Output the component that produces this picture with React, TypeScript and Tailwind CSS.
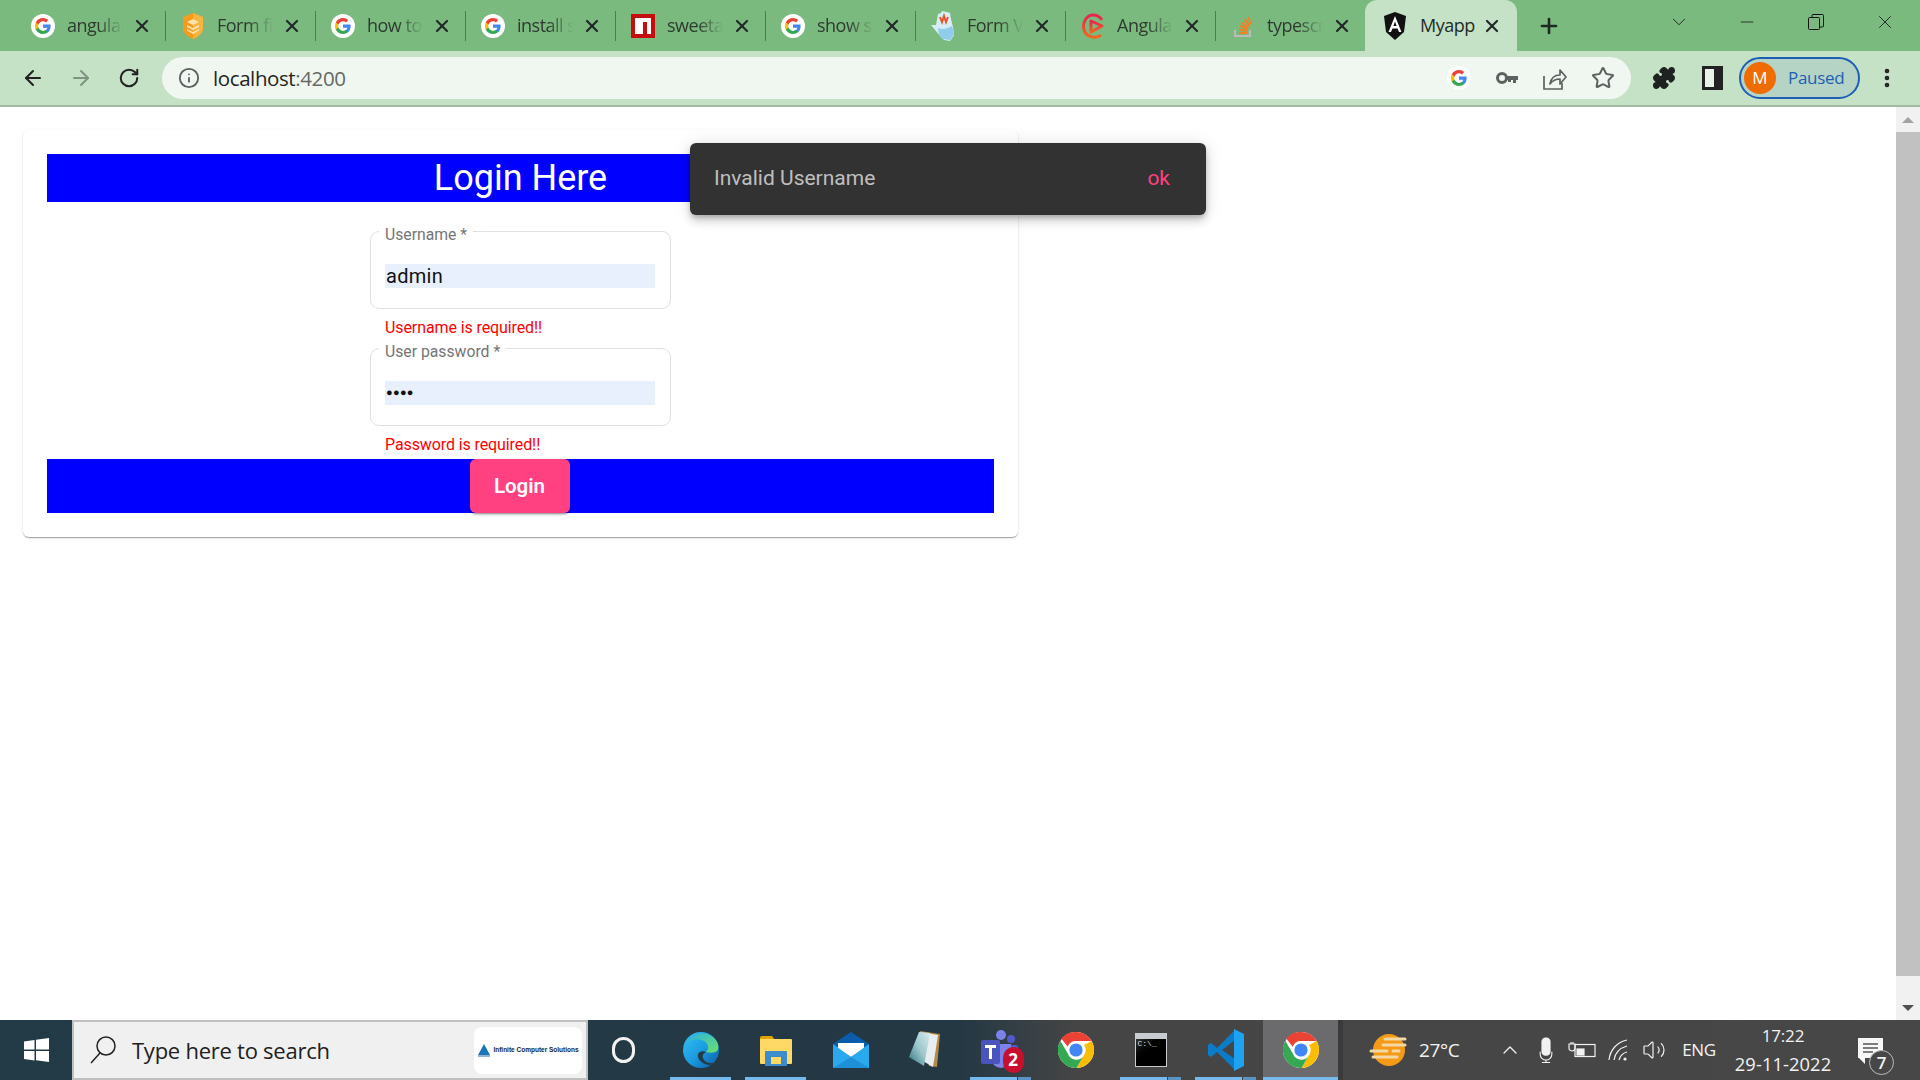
import React from "react";
import { ArrowLeft, ArrowRight, RotateCw, Info, X, Plus, ChevronDown, Minus, Star, Puzzle, EllipsisVertical, ChevronUp, Volume2 } from "lucide-react";

const G = ({ s = 24 }: { s?: number }) => (
  <svg width={s} height={s} viewBox="0 0 24 24" className="shrink-0">
    <circle cx="12" cy="12" r="12" fill="#fff" />
    <path d="M19.6 12.2c0-.6 0-1.1-.1-1.6H12v3.1h4.3c-.2 1-.8 1.9-1.6 2.4v2h2.6c1.5-1.4 2.3-3.4 2.3-5.9z" fill="#4285F4" />
    <path d="M12 20c2.2 0 4-.7 5.3-1.9l-2.6-2c-.7.5-1.6.8-2.7.8-2.1 0-3.9-1.4-4.5-3.3H4.8v2.1C6.1 18.2 8.8 20 12 20z" fill="#34A853" />
    <path d="M7.5 13.6c-.2-.5-.3-1-.3-1.6s.1-1.1.3-1.6V8.3H4.8C4.3 9.4 4 10.7 4 12s.3 2.6.8 3.7l2.7-2.1z" fill="#FBBC05" />
    <path d="M12 7.2c1.2 0 2.2.4 3 1.2l2.3-2.3C15.9 4.8 14.1 4 12 4 8.8 4 6.1 5.8 4.8 8.3l2.7 2.1c.6-1.8 2.4-3.2 4.5-3.2z" fill="#EA4335" />
  </svg>
);

const Shield = () => (
  <svg width="24" height="26" viewBox="0 0 24 26" className="shrink-0">
    <path d="M12 0l10 4v11c0 5-5 9-10 11C7 24 2 20 2 15V4z" fill="#f89a1c" />
    <path d="M12 0l10 4v11c0 5-5 9-10 11z" fill="#f5b53f" />
    <path d="M12 6l6 3-6 3-6-3zM6 12l6 3 6-3v2l-6 3-6-3zM6 16l6 3 6-3v1.5L12 21l-6-3.5z" fill="#fde3b0" />
  </svg>
);

const Npm = () => (
  <svg width="24" height="24" viewBox="0 0 24 24" className="shrink-0">
    <rect width="24" height="24" fill="#c60c0c" />
    <path d="M4 4h16v16h-4V8h-4v12H4z" fill="#fff" />
  </svg>
);

const Hand = () => (
  <svg width="26" height="30" viewBox="0 0 26 30" className="shrink-0">
    <path d="M1 14l5 0 2-11 3-1 1-2 5 1 3 1 1 6 2 8 1 8-4 6-6-1-4-4z" fill="#d6edf5" />
    <path d="M8 17c4 2 9 1 14-2l2 8-4 6-7-1-4-4z" fill="#8fcdea" />
    <path d="M10 6l2 5 2-6 2 6 2-5" stroke="#e8552d" strokeWidth="2" fill="none" />
  </svg>
);

const AngularSwirl = () => (
  <svg width="26" height="28" viewBox="0 0 26 28" className="shrink-0">
    <defs>
      <linearGradient id="sw" x1="0" y1="0" x2="0" y2="1">
        <stop offset="0" stopColor="#e6264f" />
        <stop offset="1" stopColor="#f2661f" />
      </linearGradient>
    </defs>
    <path d="M21 23c-3 3-14 4-17-5C2 10 7 3 13 3c4 0 7 2 9 5" stroke="url(#sw)" strokeWidth="3" fill="none" />
    <path d="M11 9l11 5-11 6z" fill="none" stroke="url(#sw)" strokeWidth="3" strokeLinejoin="round" />
  </svg>
);

const SO = () => (
  <svg width="24" height="26" viewBox="0 0 24 26" className="shrink-0">
    <path d="M4 17v6h15v-6" stroke="#bcbbbb" strokeWidth="2" fill="none" />
    <path d="M8 20h8M8.3 16.5l8 1.5M9.3 13l7.4 3.2M11 9.6l6.4 5M13.8 6.4l4.7 6.2M17.3 4l2.8 7.2" stroke="#f48024" strokeWidth="2" />
  </svg>
);

const AngularA = () => (
  <svg width="24" height="28" viewBox="0 0 24 28" className="shrink-0">
    <path d="M12 0L1 4l2 16 9 8 9-8 2-16z" fill="#111" />
    <path d="M12 4L5.5 20H8l1.4-3.6h5.2L16 20h2.5zM10.4 14L12 9.6l1.6 4.4z" fill="#fff" fillRule="evenodd" />
  </svg>
);

const Tab = ({ icon, label }: { icon: React.ReactNode; label: string }) => (
  <div className="flex items-center w-[150px] h-full shrink-0">
    <div className="w-[54px] flex justify-center items-center">{icon}</div>
    <span className="w-[56px] -ml-[3px] overflow-hidden whitespace-nowrap text-[18px] text-[#2f3a30] [mask-image:linear-gradient(90deg,#000_55%,transparent_100%)] font-['Open_Sans',sans-serif] tracking-[-0.5px]">
      {label}
    </span>
    <X size={20} strokeWidth={2.6} className="ml-[9px] text-[#22282a] shrink-0" />
    <div className="ml-auto w-[1px] h-[30px] bg-[#4f7a52]" />
  </div>
);

const Field = ({ label, children, mt }: { label: string; children: React.ReactNode; mt: string }) => (
  <fieldset className={`w-[301px] h-[86px] border border-[#e0e0e0] rounded-[9px] pl-[14px] pr-[15px] ${mt}`}>
    <legend className="px-[6px] -ml-[6px] text-[15.75px] leading-[17px] text-[#757575]">
      <span className="block translate-y-[3px]">{label}</span>
    </legend>
    <div className="mt-[24px] h-[24px] w-[270px] bg-[#e8f0fe] flex items-center">{children}</div>
  </fieldset>
);

const Chrome = () => (
  <svg width="36" height="36" viewBox="0 0 36 36">
    <circle cx="18" cy="18" r="18" fill="#fff" />
    <path d="M18 0a18 18 0 0115.6 9H18a9 9 0 00-8.4 5.8L3.3 6.6A18 18 0 0118 0z" fill="#ea4335" />
    <path d="M33.6 9A18 18 0 0118.5 36l7.3-12.6A9 9 0 0026 13z" fill="#fbbc04" />
    <path d="M2.4 9A18 18 0 0018.5 36l6.7-11.6A9 9 0 019.8 21.5z" fill="#34a853" />
    <circle cx="18" cy="18" r="8.2" fill="#fff" />
    <circle cx="18" cy="18" r="6.6" fill="#4285f4" />
  </svg>
);

const Edge = () => (
  <svg width="36" height="36" viewBox="0 0 36 36">
    <defs>
      <linearGradient id="eg" x1="0" y1="0" x2="1" y2="1">
        <stop offset="0" stopColor="#35c1f1" />
        <stop offset="0.5" stopColor="#1b9de2" />
        <stop offset="1" stopColor="#0c59a4" />
      </linearGradient>
      <linearGradient id="eg2" x1="0" y1="0" x2="1" y2="1">
        <stop offset="0" stopColor="#2bb3e0" />
        <stop offset="1" stopColor="#6fe06a" />
      </linearGradient>
    </defs>
    <circle cx="18" cy="18" r="18" fill="url(#eg)" />
    <path d="M5 10C9 2 20-1 28 4c7 4 9 11 6 15-2 2-8 2-11 1 3-3 3-8-2-11C15 6 9 7 5 10z" fill="url(#eg2)" />
    <path d="M23 20c-4-2-9 0-8 5 1 4 6 8 12 8 3 0 6-1 7-3-6 3-13 0-14-4-1-3 1-5 3-6z" fill="#263a45" />
  </svg>
);

const Folder = () => (
  <svg width="32" height="32" viewBox="0 0 32 32">
    <path d="M0 4a2 2 0 012-2h10l3 4H0z" fill="#e2a500" />
    <rect y="5" width="32" height="25" rx="1" fill="#ffd966" />
    <rect x="5" y="17" width="22" height="15" rx="1" fill="#3d8bcb" />
    <rect x="11" y="23" width="10" height="7" fill="#ffd966" />
  </svg>
);

const Mail = () => (
  <svg width="36" height="36" viewBox="0 0 36 36">
    <path d="M0 12L18 0l18 12v6H0z" fill="#0b5cab" />
    <path d="M5 11h26v6L18 25 5 17z" fill="#fff" />
    <path d="M0 12l18 13 18-13v24H0z" fill="#2aa9ee" />
    <path d="M36 36H0l18-11z" fill="#1e90d8" />
  </svg>
);

const Notepad = () => (
  <svg width="36" height="38" viewBox="0 0 36 38">
    <defs>
      <linearGradient id="np" x1="0" y1="1" x2="1" y2="0">
        <stop offset="0" stopColor="#2d7481" />
        <stop offset="0.5" stopColor="#9cc7cc" />
        <stop offset="1" stopColor="#d7ecef" />
      </linearGradient>
    </defs>
    <path d="M12 0l20 3-3 33-8-1z" fill="#b48a4a" />
    <path d="M11 1l19 3-5 32-10-6z" fill="#e8eef0" />
    <path d="M11 1L1 26l15 9 6-33z" fill="url(#np)" />
  </svg>
);

const Teams = () => (
  <div className="relative w-[40px] h-[40px]">
    <svg width="40" height="40" viewBox="0 0 40 40">
      <circle cx="20" cy="5" r="5" fill="#7b83eb" />
      <circle cx="30" cy="9" r="4" fill="#5059c9" />
      <rect x="24" y="15" width="13" height="14" rx="2" fill="#5059c9" />
      <path d="M10 14h20v14a10 10 0 01-20 0z" fill="#7b83eb" />
      <rect x="0" y="10" width="19" height="24" rx="2" fill="#4b53bc" />
      <path d="M4 15h11v3h-4v11H8V18H4z" fill="#fff" />
    </svg>
    <div className="absolute -right-[3px] -bottom-[3px] w-[21px] h-[26px] rounded-full bg-[#c8102e] text-white text-[17px] font-bold flex items-center justify-center font-['Open_Sans',sans-serif]">
      2
    </div>
  </div>
);

const Cmd = () => (
  <div className="w-[32px] h-[34px] bg-[#c8ccd0] p-[1px] flex flex-col">
    <div className="h-[5px] bg-[#c8ccd0]" />
    <div className="flex-1 bg-gradient-to-br from-[#333] via-black to-black text-[8px] leading-[10px] text-[#ddd] pl-[2px] font-['Liberation_Mono',monospace]">
      C:\_
    </div>
  </div>
);

const VSCode = () => (
  <svg width="36" height="42" viewBox="0 0 36 42">
    <path d="M27 1L9 19 3 14 0 16v10l3 2 6-5 18 18V30L14 21 27 11z" fill="#0a7cc9" />
    <path d="M26 0l10 5v32l-10 5z" fill="#1fa3f0" />
  </svg>
);

const TaskItem = ({ children, bar, split, active }: { children: React.ReactNode; bar?: boolean; split?: boolean; active?: boolean }) => (
  <div className={`w-[75px] h-full flex flex-col shrink-0 ${active ? "bg-[#6b6b6d]" : ""}`}>
    <div className="flex-1 flex items-center justify-center pt-[2px]">{children}</div>
    {bar ? (
      <div className={`h-[3px] flex gap-[1px] ${active ? "" : "mx-[7px]"}`}>
        <div className="flex-1 bg-[#76b9ed]" />
        {split ? <div className="w-[13px] bg-[#5a94c4]" /> : null}
      </div>
    ) : (
      <div className="h-[3px]" />
    )}
  </div>
);

export default function App() {
  return (
    <div className="w-[1920px] h-[1080px] overflow-hidden flex flex-col bg-white font-['Roboto',sans-serif] relative">
      {/* Tab strip */}
      <div className="h-[51px] bg-[#7aba7e] flex items-center shrink-0 pl-[16px]">
        <Tab icon={<G />} label="angular" />
        <Tab icon={<Shield />} label="Form fi" />
        <Tab icon={<G />} label="how to" />
        <Tab icon={<G />} label="install s" />
        <Tab icon={<Npm />} label="sweeta" />
        <Tab icon={<G />} label="show s" />
        <Tab icon={<Hand />} label="Form V" />
        <Tab icon={<AngularSwirl />} label="Angula" />
        <Tab icon={<SO />} label="typescr" />
        <div className="w-[152px] -ml-[1px] h-full bg-[#c5e1c6] rounded-t-[12px] flex items-center shrink-0">
          <div className="w-[60px] flex justify-center"><AngularA /></div>
          <span className="-ml-[5px] w-[62px] text-[18px] text-[#222c24] font-['Open_Sans',sans-serif] tracking-[-0.5px]">Myapp</span>
          <X size={20} strokeWidth={2.6} className="ml-[0px] text-[#22282a]" />
        </div>
        <div className="w-[34px] flex justify-center ml-[15px] shrink-0">
          <Plus size={24} strokeWidth={2.6} className="text-[#1e2a20]" />
        </div>
        <div className="ml-[102px] flex items-center h-full text-[#1d1d1d] pb-[7px]">
          <ChevronDown size={22} strokeWidth={1} className="mr-[47px]" />
          <Minus size={20} strokeWidth={1} className="mr-[51px]" />
          <svg width="16" height="16" viewBox="0 0 16 16" className="mr-[50px]" fill="none" stroke="#111" strokeWidth="1">
            <rect x="0.5" y="3.5" width="11" height="12" rx="1" />
            <path d="M4 3V1.5a1 1 0 011-1h9.5a1 1 0 011 1V12a1 1 0 01-1 1H12" />
          </svg>
          <X size={22} strokeWidth={1} />
        </div>
      </div>

      {/* Toolbar */}
      <div className="h-[54px] bg-[#c5e1c6] flex items-center shrink-0 pl-[9px]">
        <div className="w-12 flex justify-center"><ArrowLeft size={24} strokeWidth={2} className="text-[#222]" /></div>
        <div className="w-12 flex justify-center"><ArrowRight size={24} strokeWidth={2} className="text-[#7e9480]" /></div>
        <div className="w-12 flex justify-center"><RotateCw size={22} strokeWidth={2.2} className="text-[#222]" /></div>
        <div className="w-[1469px] ml-[9px] h-[42px] rounded-full bg-[#f0f7f1] flex items-center pl-[16px] pr-[4px] shrink-0">
          <Info size={22} strokeWidth={2} className="text-[#5b5f60] mr-[13px]" />
          <span className="text-[20.5px] font-['Open_Sans',sans-serif] text-[#1f2421] tracking-[-0.4px]">
            localhost<span className="text-[#626a64]">:4200</span>
          </span>
          <div className="flex-1" />
          <div className="w-12 flex justify-center"><G s={24} /></div>
          <div className="w-12 flex justify-center">
            <svg width="22" height="14" viewBox="0 0 22 14"><circle cx="6" cy="7" r="4.5" fill="none" stroke="#5c6260" strokeWidth="3" /><path d="M10 5h12v4h-2v3h-3V9h-2v2h-3V9h-2z" fill="#5c6260" /></svg>
          </div>
          <div className="w-12 flex justify-center">
            <svg width="24" height="26" viewBox="0 0 24 26" fill="none" stroke="#5c6260" strokeWidth="1.7"><path d="M1 11v13h18v-6" /><path d="M7 19c1-6 5-9 10-9V5l6 7-6 7v-5c-4 0-7 1-10 5z" strokeLinejoin="round" /></svg>
          </div>
          <div className="w-12 flex justify-center"><Star size={24} strokeWidth={2} className="text-[#5c6260]" /></div>
        </div>
        <div className="w-12 ml-[9px] flex justify-center"><Puzzle size={24} className="text-[#1e2321]" fill="#1e2321" /></div>
        <div className="w-12 flex justify-center">
          <div className="w-[21px] h-[24px] border-[3px] border-r-[9px] border-[#222] bg-[#e8f2e8]" />
        </div>
        <div className="w-[121px] ml-[3px] h-[42px] rounded-full border-2 border-[#1c5fb4] bg-[#b5d4c6] flex items-center pl-[3px]">
          <div className="w-[32px] h-[32px] rounded-full bg-[#ef6c00] text-white text-[17px] flex items-center justify-center font-['Open_Sans',sans-serif]">M</div>
          <span className="ml-[12px] text-[17px] text-[#1c5fb4] font-['Open_Sans',sans-serif] tracking-[-0.3px]">Paused</span>
        </div>
        <div className="w-[54px] flex justify-center"><EllipsisVertical size={24} strokeWidth={2.6} className="text-[#222]" /></div>
      </div>
      <div className="h-[2px] bg-[#a4b8a5] shrink-0" />

      {/* Page */}
      <div className="flex-1 flex min-h-0 relative">
        <div className="flex-1 pl-[23px] pt-[23px]">
          <div className="w-[995px] h-[407px] rounded-[6px] bg-white p-[24px] flex flex-col shadow-[0_2px_1px_-1px_rgba(0,0,0,0.2),0_1px_1px_0_rgba(0,0,0,0.14),0_1px_3px_0_rgba(0,0,0,0.12)]">
            <div className="h-[48px] bg-[#0000ff] text-white text-[36px] leading-[48px] text-center shrink-0">Login Here</div>
            <div className="flex flex-col items-center">
              <Field label="Username *" mt="mt-[21px]">
                <span className="text-[20px] text-[#111] tracking-[0.3px] pl-[1px]">admin</span>
              </Field>
              <div className="w-[271px] text-[16px] leading-[22px] text-[#ff0000] mt-[8px] tracking-[-0.1px]">Username is required!!</div>
              <Field label="User password *" mt="mt-[1px]">
                <span className="text-[11px] text-[#111] tracking-[0.3px] pl-[1px]">●●●●</span>
              </Field>
              <div className="w-[271px] text-[16px] leading-[22px] text-[#ff0000] mt-[8px] tracking-[-0.1px]">Password is required!!</div>
            </div>
            <div className="h-[54px] mt-[3px] bg-[#0000ff] flex justify-center shrink-0">
              <button className="w-[100px] h-[54px] mr-[2px] rounded-[6px] bg-[#ff4081] text-white text-[20.5px] font-semibold shadow-[0_3px_1px_-2px_rgba(0,0,0,0.2),0_2px_2px_0_rgba(0,0,0,0.14),0_1px_5px_0_rgba(0,0,0,0.12)]">Login</button>
            </div>
          </div>
        </div>
        {/* Scrollbar */}
        <div className="w-[24px] bg-[#f1f1f1] flex flex-col items-center shrink-0">
          <div className="h-[25px] flex items-center justify-center w-full shrink-0">
            <div className="w-0 h-0 border-l-[6px] border-r-[6px] border-b-[6px] border-l-transparent border-r-transparent border-b-[#a3a3a3]" />
          </div>
          <div className="w-full h-[844px] bg-[#c1c1c1] shrink-0" />
          <div className="h-[25px] mt-auto flex items-center justify-center w-full shrink-0">
            <div className="w-0 h-0 border-l-[6px] border-r-[6px] border-t-[6px] border-l-transparent border-r-transparent border-t-[#505050]" />
          </div>
        </div>
      </div>

      {/* Snackbar */}
      <div className="absolute left-[690px] top-[143px] w-[516px] h-[72px] rounded-[6px] bg-[#323232] flex items-center justify-between pl-[24px] pr-[36px] shadow-[0_3px_5px_-1px_rgba(0,0,0,0.2),0_6px_10px_0_rgba(0,0,0,0.14),0_1px_18px_0_rgba(0,0,0,0.12)]">
        <span className="text-[21px] font-normal text-white/70">Invalid Username</span>
        <span className="text-[21px] font-normal text-[#ff4081]">ok</span>
      </div>

      {/* Taskbar */}
      <div className="h-[60px] shrink-0 flex bg-[linear-gradient(90deg,#223b46_0%,#243844_50%,#454545_56%,#474747_100%)] text-white">
        <div className="w-[72px] flex items-center justify-center shrink-0">
          <svg width="25" height="24" viewBox="0 0 25 24" fill="#fff"><path d="M0 3.5L10.5 2v9.5H0zM12 1.8L25 0v11.5H12zM0 13h10.5v9.5L0 21zM12 13h13v11l-13-1.8z" /></svg>
        </div>
        <div className="w-[516px] shrink-0 border-2 border-[#c0c0c0] bg-[#f0f0f0] flex items-center pl-[15px] pr-[4px]">
          <svg width="28" height="30" viewBox="0 0 28 30" fill="none" stroke="#222" strokeWidth="1.5" className="shrink-0">
            <circle cx="17" cy="11" r="9" />
            <path d="M11 18L2 28" />
          </svg>
          <span className="ml-[15px] text-[22px] text-[#202020] font-['Open_Sans',sans-serif] tracking-[-0.25px]">Type here to search</span>
          <div className="ml-auto w-[108px] h-[47px] rounded-[8px] bg-white flex items-center justify-center gap-[2px]">
            <svg width="14" height="16" viewBox="0 0 14 16"><path d="M7 2l6 11H1z" fill="#1a74b8" /><rect x="1" y="13" width="12" height="2" fill="#8fb8d6" /></svg>
            <span className="text-[6.5px] font-bold text-[#222] whitespace-nowrap font-['Liberation_Sans',sans-serif]">Infinite Computer Solutions</span>
          </div>
        </div>
        <TaskItem>
          <div className="w-[23px] h-[26px] mr-[4px] rounded-full border-[3px] border-[#f2f2f2]" />
        </TaskItem>
        <TaskItem bar><Edge /></TaskItem>
        <TaskItem bar><Folder /></TaskItem>
        <TaskItem><Mail /></TaskItem>
        <TaskItem><Notepad /></TaskItem>
        <TaskItem bar split><Teams /></TaskItem>
        <TaskItem><Chrome /></TaskItem>
        <TaskItem bar split><Cmd /></TaskItem>
        <TaskItem bar split><VSCode /></TaskItem>
        <TaskItem bar active><Chrome /></TaskItem>
        <div className="flex-1 flex items-center border-l-[5px] border-[#3a3a3a] font-['Open_Sans',sans-serif] text-[#f2f2f2]">
          <svg width="40" height="34" viewBox="0 0 40 34" className="ml-[26px] shrink-0">
            <circle cx="20" cy="17" r="16" fill="#f49a17" />
            <path d="M16 6h20M14 12h22M2 18h16M24 18h6M4 24h24" stroke="#f3d9a4" strokeWidth="3" strokeLinecap="round" />
          </svg>
          <span className="ml-[10px] w-[44px] text-[19px] tracking-[-0.4px] shrink-0 whitespace-nowrap">27°C</span>
          <ChevronUp size={24} strokeWidth={1.3} className="ml-[35px] shrink-0" />
          <svg width="20" height="26" viewBox="0 0 24 30" fill="none" stroke="#f2f2f2" strokeWidth="1.3" className="ml-[14px] shrink-0">
            <rect x="6.5" y="0" width="11" height="22" rx="5" fill="#f2f2f2" stroke="none" />
            <path d="M5 17v3a7 7 0 0014 0v-3M12 27v3M7 30h10" />
          </svg>
          <svg width="28" height="16" viewBox="0 0 28 16" fill="none" stroke="#f2f2f2" strokeWidth="1.2" className="ml-[12px] shrink-0">
            <rect x="7" y="2.5" width="20" height="12" />
            <rect x="9" y="7" width="7" height="6" fill="#f2f2f2" />
            <path d="M1 2h6v4a3 3 0 01-6 0zM3 0v2M5 0v2" />
          </svg>
          <svg width="24" height="24" viewBox="0 0 24 24" fill="none" stroke="#f2f2f2" strokeWidth="1.2" className="ml-[11px] shrink-0">
            <path d="M2 22C3 12 10 4 20 2M7 22c1-7 6-12 13-14M12 22c1-4 4-7 8-8" />
            <circle cx="18" cy="21" r="1.6" fill="#f2f2f2" stroke="none" />
          </svg>
          <Volume2 size={24} strokeWidth={1.2} className="ml-[11px] shrink-0" />
          <span className="ml-[13px] w-[40px] text-center text-[17px] tracking-[-0.3px] shrink-0">ENG</span>
          <div className="ml-[9px] w-[110px] text-center leading-[28px] shrink-0">
            <div className="text-[17px] tracking-[-0.2px]">17:22</div>
            <div className="text-[18.3px] tracking-[0.1px] whitespace-nowrap">29-11-2022</div>
          </div>
          <div className="ml-[12px] w-[40px] h-[40px] relative shrink-0">
            <svg width="25" height="28" viewBox="0 0 25 28" className="absolute left-[8px] top-[8px]" fill="#f7f7f7">
              <path d="M0 0h25v20H7v6l-6-6H0z" />
              <path d="M5 6h15M5 10h15M5 14h10" stroke="#555" strokeWidth="1.4" />
            </svg>
            <div className="absolute -right-[4px] -bottom-[5px] w-[25px] h-[25px] rounded-full border border-[#bbb] bg-[#474747] text-[17px] font-semibold flex items-center justify-center">7</div>
          </div>
        </div>
      </div>
    </div>
  );
}
